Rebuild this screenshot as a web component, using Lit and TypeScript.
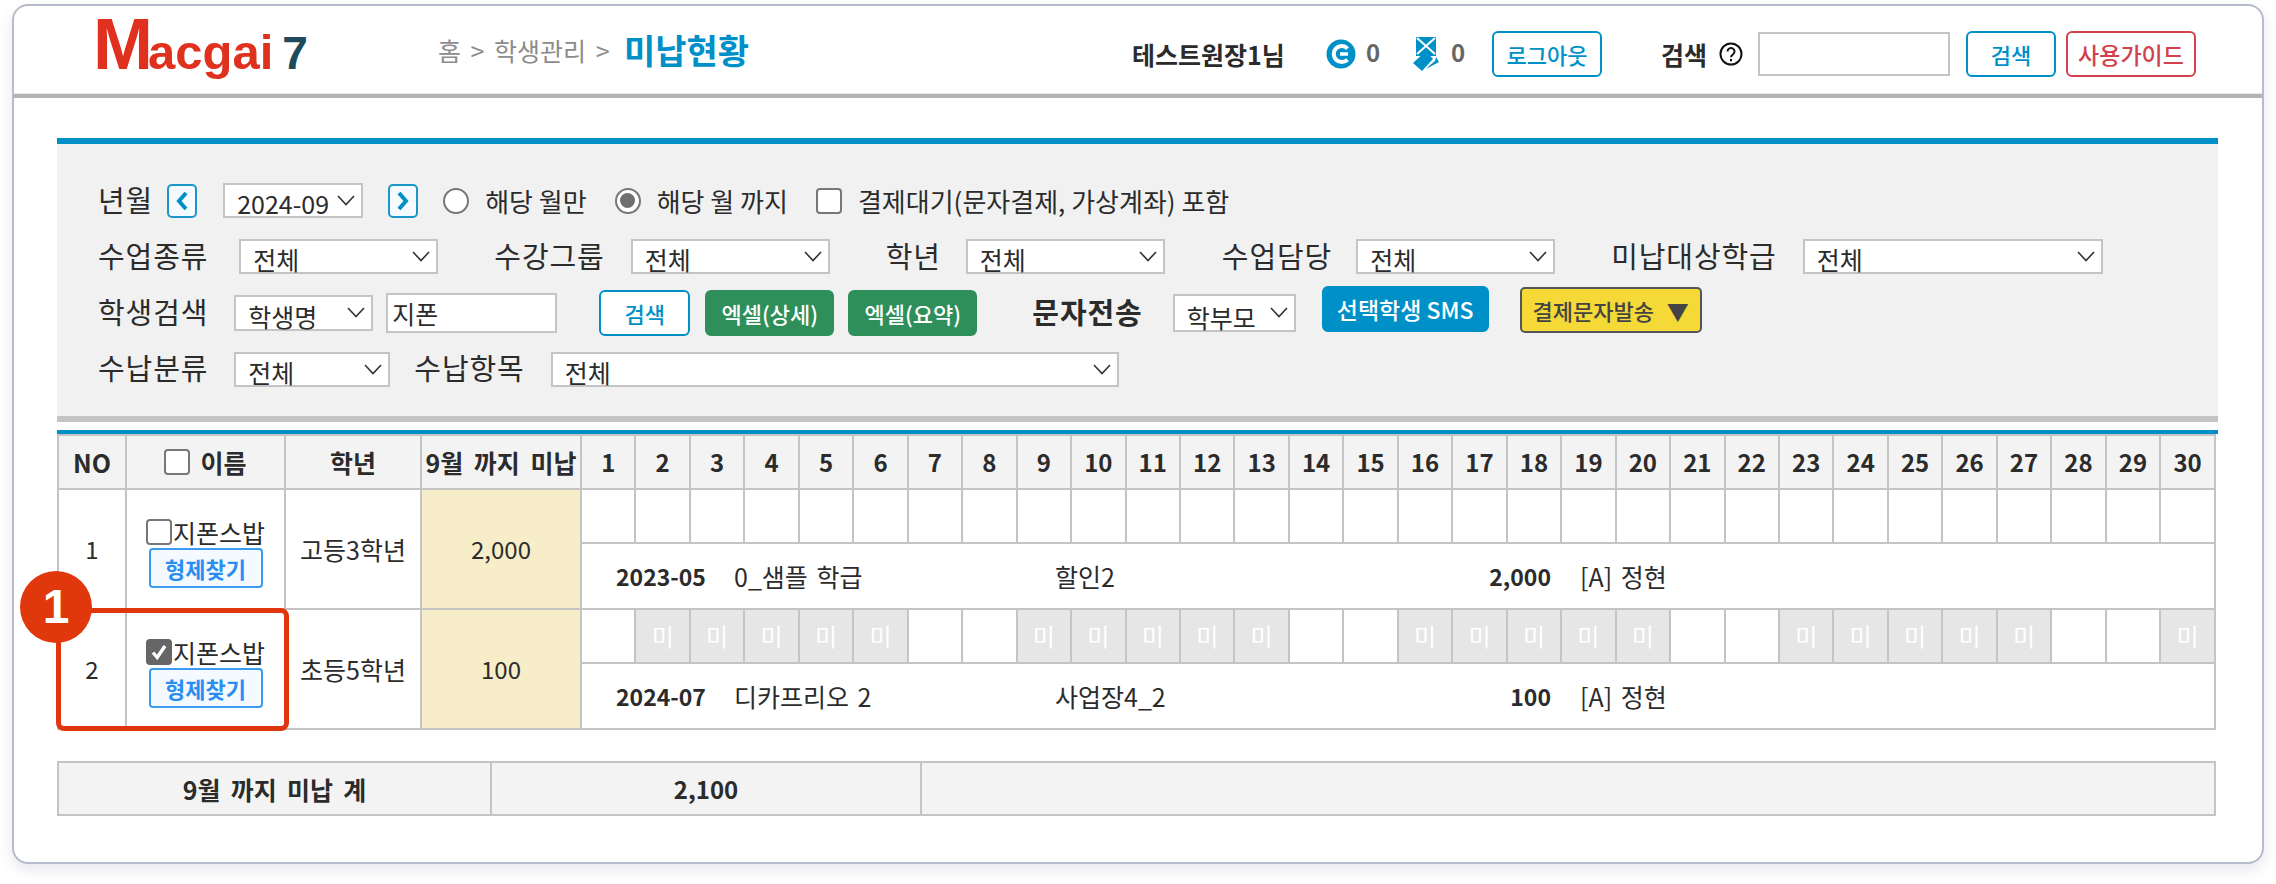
import { LitElement, html, css } from 'lit';
import { customElement } from 'lit/decorators.js';

const DAYS = Array.from({ length: 30 }, (_, i) => i + 1);
// days of the second student that are still unpaid
const UNPAID = new Set([2, 3, 4, 5, 6, 9, 10, 11, 12, 13, 16, 17, 18, 19, 20, 23, 24, 25, 26, 27, 30]);

interface Student {
    no: number;
    checked: boolean;
    grade: string;
    owed: string;
    month: string;
    group: string;
    item: string;
    teacher: string;
    unpaidDays: Set<number>;
}

const STUDENTS: Student[] = [
    { no: 1, checked: false, grade: '고등3학년', owed: '2,000', month: '2023-05', group: '0_샘플 학급', item: '할인2', teacher: '[A] 정현', unpaidDays: new Set() },
    { no: 2, checked: true, grade: '초등5학년', owed: '100', month: '2024-07', group: '디카프리오 2', item: '사업장4_2', teacher: '[A] 정현', unpaidDays: UNPAID },
];

@customElement('app-root')
export class AppRoot extends LitElement {
    static styles = css`
        :host {
            display: block;
            height: 884px;
            background: #fff;
            font-family: "Noto Sans CJK KR", "Noto Sans", sans-serif;
            color: #2b2b2b;
            font-size: 24px;
            line-height: 30px;
        }

        .card {
            box-sizing: border-box;
            position: relative;
            margin: 0 12px;
            top: 4px;
            height: 860px;
            border: 2px solid #b6bccb;
            border-radius: 16px;
            box-shadow: 0 6px 14px rgba(120, 130, 150, 0.18);
            background: #fff;
        }

        header {
            display: flex;
            align-items: center;
            height: 88px;
            padding-left: 79px;
            border-bottom: 4px solid #b4b4b4;
            box-shadow: inset 0 -1px 0 #e8e8e8;
        }

        .logo {
            display: flex;
            align-items: baseline;
            width: 345px;
            margin-bottom: 4px;
            font-family: "Liberation Sans", sans-serif;
            font-weight: 700;
            color: #e0301e;
            font-size: 49px;
            line-height: 60px;
        }
        .logo .m { font-size: 72px; letter-spacing: -5px; }
        .logo .seven { color: #1d4a5c; font-size: 46px; margin-left: 9px; }

        .crumb { color: #8c8c8c; font-size: 25px; word-spacing: 4px; width: 186px; white-space: nowrap; }
        .page-title { color: #0090c8; font-size: 34px; font-weight: 700; width: 510px; white-space: nowrap; }
        .tools { display: flex; align-items: center; margin-top: 8px; }
        .user { font-weight: 700; font-size: 25px; width: 194px; white-space: nowrap; margin-left: -2px; }
        .point { color: #666; font-weight: 700; font-size: 24px; margin-left: 10px; width: 45px; margin-top: -4px; }
        .search-label { font-weight: 700; font-size: 25px; margin-left: 59px; white-space: nowrap; }
        .help { margin: 0 15px 0 12px; display: block; }

        .btn {
            box-sizing: border-box;
            height: 46px;
            border: 2px solid #0090c8;
            border-radius: 6px;
            background: #fff;
            color: #0090c8;
            font: inherit;
            font-size: 22px;
            font-weight: 500;
            padding: 0;
            white-space: nowrap;
        }
        .btn.logout { width: 110px; margin-left: -4px; }
        .btn.top-search { width: 90px; margin: 0 10px 0 16px; }
        .btn.guide { width: 130px; border-color: #d2414c; color: #d2414c; font-size: 23px; }
        .btn.row-search { width: 91px; margin-left: 42px; }
        .btn.excel { width: 129px; background: #2e8f5b; border-color: #2e8f5b; color: #fff; margin-left: 15px; }
        .btn.excel + .btn.excel { margin-left: 14px; }
        .btn.sms { width: 167px; background: #0090c8; color: #fff; margin: -7px 0 0 26px; font-size: 23px; }
        .btn.pay { width: 182px; background: #f5d936; border-color: #555; color: #444; margin: -6px 0 0 31px; word-spacing: 8px; border-radius: 5px; }

        input.text {
            box-sizing: border-box;
            border: 2px solid #c4c4c4;
            background: #fff;
            font: inherit;
            font-size: 25px;
            padding: 0 4px;
            color: inherit;
            margin: 0;
        }
        input.top { width: 192px; height: 44px; }
        input.name { width: 171px; height: 40px; margin-left: 13px; }

        main { padding: 40px 44px 0 43px; }

        .filters {
            box-sizing: border-box;
            height: 284px;
            padding-top: 39px;
            background: #f1f1f1;
            border-top: 6px solid #0090c8;
            border-bottom: 6px solid #c4c4c4;
        }
        .row { display: flex; align-items: center; padding-left: 41px; white-space: nowrap; }
        .row.r1 { height: 35px; margin-bottom: 21px; }
        .row.r2 { height: 35px; margin-bottom: 21px; }
        .row.r3 { height: 35px; margin-bottom: 21px; }
        .row.r4 { height: 36px; }

        label.field { font-size: 29px; letter-spacing: 0.9px; line-height: 30px; margin-bottom: 4px; }
        label.strong { font-weight: 700; margin-left: 55px; }

        .pick {
            box-sizing: border-box;
            display: flex;
            align-items: flex-end;
            justify-content: space-between;
            flex: none;
            height: 35px;
            border: 2px solid #c4c4c4;
            background: #fff;
            padding: 0 6px 0 12px;
            font-size: 25px;
            line-height: 30px;
        }
        .pick span { margin-bottom: -2px; }
        .pick svg { align-self: center; }

        .w-month { width: 140px; margin-left: 26px; }
        .w-200 { width: 199px; }
        .w-300 { width: 300px; }
        .w-kind { width: 139px; height: 36px; margin-left: 26px; }
        .w-parent { width: 123px; margin-left: 30px; height: 38px; }
        .w-cat { width: 156px; margin-left: 26px; }
        .w-item { width: 568px; margin-left: 26px; }
        .ml-24 { margin-left: 24px; }
        .ml-25 { margin-left: 25px; }
        .ml-26 { margin-left: 26px; }
        .ml-31 { margin-left: 31px; }
        .gap-24 { margin-left: 24px; }
        .gap-56 { margin-left: 56px; }
        .gap-57 { margin-left: 57px; }

        .nav {
            box-sizing: border-box;
            width: 30px;
            height: 34px;
            display: flex;
            align-items: center;
            justify-content: center;
            background: #f4fafd;
            border: 2px solid #1a96c8;
            border-radius: 5px;
        }
        .nav.prev { margin-left: 14px; }
        .nav.next { margin-left: 25px; }

        .opt { display: flex; align-items: center; font-size: 26px; }
        .opt .tick { margin-right: 16px; }
        .opt.first { margin-left: 25px; margin-right: 28px; }
        .opt.second { margin-right: 28px; }
        .dot {
            box-sizing: border-box;
            width: 26px;
            height: 26px;
            border: 2px solid #777;
            border-radius: 50%;
            background: #fff;
            display: flex;
            align-items: center;
            justify-content: center;
        }
        .dot.on::after {
            content: '';
            width: 15px;
            height: 15px;
            border-radius: 50%;
            background: #6f6f6f;
        }
        .box {
            box-sizing: border-box;
            display: inline-flex;
            align-items: center;
            justify-content: center;
            flex: none;
            width: 26px;
            height: 26px;
            border: 2px solid #777;
            border-radius: 4px;
            background: #fff;
        }
        .box.on { background: #666; border-color: #666; }

        .grid-wrap {
            margin-top: 8px;
            border-top: 4px solid #0090c8;
        }
        table {
            border-collapse: collapse;
            table-layout: fixed;
            width: 2159px;
        }
        td, th {
            border: 2px solid #c4c4c4;
            padding: 0;
            text-align: center;
            font-weight: 400;
        }
        thead th {
            height: 52px;
            background: #f3f3f3;
            font-weight: 700;
            font-size: 25px;
            white-space: nowrap;
        }
        thead th.day { font-size: 24px; }
        thead th.until { word-spacing: 5px; }
        thead .name-head { display: flex; align-items: center; justify-content: center; gap: 10px; }
        .c-no { width: 68px; }
        .c-name { width: 159px; }
        .c-grade { width: 136px; }
        .c-owed { width: 160px; }
        .day-row td { height: 52px; }
        .detail-row td { height: 64px; }
        td.grade { font-size: 25px; }
        td.owed { background: #f7edc8; }
        td.miss { background: #e6e6e6; color: #fff; font-size: 24px; }
        td.person { padding-top: 9px; }

        .who { display: flex; align-items: center; justify-content: center; font-size: 25px; line-height: 26px; }
        .who .box { margin-right: 1px; }
        .btn.find {
            display: block;
            width: 114px;
            height: 40px;
            margin: 3px auto 0;
            border-color: #3a9bf0;
            background: #f4faff;
            color: #2a8df0;
            border-radius: 4px;
            font-weight: 700;
        }

        .detail {
            display: grid;
            grid-template-columns: 118px 321px 432px 64px auto;
            align-items: center;
            padding-left: 34px;
            text-align: left;
            line-height: 30px;
            font-size: 25px;
            word-spacing: 3px;
        }
        .detail b { font-weight: 700; font-size: 23px; }
        .detail .amount { text-align: right; }
        .detail .teacher { margin-left: 29px; }

        .total { margin-top: 31px; }
        .total td { height: 51px; background: #f3f3f3; font-weight: 700; font-size: 24px; }
        .total td.sum-label { font-size: 25px; word-spacing: 4.5px; }
        .t-label { width: 433px; }
        .t-sum { width: 430px; }

        .mark {
            position: absolute;
            left: 42px;
            top: 602px;
            box-sizing: border-box;
            width: 233px;
            height: 123px;
            border: 5px solid #e0360e;
            border-radius: 8px;
            pointer-events: none;
        }
        .badge {
            position: absolute;
            left: 6px;
            top: 565px;
            width: 72px;
            height: 72px;
            border-radius: 50%;
            background: #e0380c;
            color: #fff;
            font-family: "Liberation Sans", sans-serif;
            font-weight: 700;
            font-size: 48px;
            line-height: 72px;
            text-align: center;
        }
    `;

    private chevron() {
        return html`<svg width="18" height="11" viewBox="0 0 18 11" fill="none" stroke="#333" stroke-width="1.6"><path d="M1 1l8 8.5L17 1"/></svg>`;
    }

    private pick(value: string, cls: string) {
        return html`<div class="pick ${cls}"><span>${value}</span>${this.chevron()}</div>`;
    }

    private navArrow(d: string) {
        return html`<svg width="14" height="20" viewBox="0 0 14 20" fill="none" stroke="#0090c8" stroke-width="4"><path d=${d}/></svg>`;
    }

    private tick() {
        return html`<svg width="18" height="18" viewBox="0 0 18 18" fill="none" stroke="#fff" stroke-width="3.4"><path d="M3 9.5l4.2 5L15 3"/></svg>`;
    }

    private renderHeader() {
        return html`
            <header>
                <div class="logo"><span class="m">M</span><span>acgai</span><span class="seven">7</span></div>
                <div class="crumb">홈 &gt; 학생관리 &gt;</div>
                <div class="page-title">미납현황</div>
                <div class="tools">
                    <div class="user">테스트원장1님</div>
                    <svg width="30" height="30" viewBox="0 0 30 30"><circle cx="15" cy="15" r="14.5" fill="#0090c8"/><path d="M21.5 9.5a8 8 0 1 0 0 11" fill="none" stroke="#fff" stroke-width="4"/><path d="M14 15h8" stroke="#fff" stroke-width="3.5"/></svg>
                    <span class="point">0</span>
                    <svg width="30" height="35" viewBox="0 0 28 35"><rect x="4" width="20" height="19" fill="#0090c8"/><path d="M5 1l18 16M23 1L5 17" stroke="#fff" stroke-width="2"/><path d="M1 26l13-12 7 8-11 12z" fill="#0090c8"/><path d="M14 32l13-7-3-5-1 4-6 5z" fill="#0090c8"/></svg>
                    <span class="point">0</span>
                    <button class="btn logout">로그아웃</button>
                    <span class="search-label">검색</span>
                    <svg class="help" width="24" height="24" viewBox="0 0 24 24" fill="none" stroke="#111" stroke-width="2"><circle cx="12" cy="12" r="10.5"/><path d="M8.5 9.5a3.5 3.5 0 1 1 5.6 2.8c-1.3 1-2.1 1.5-2.1 3"/><path d="M12 17v2.2"/></svg>
                    <input class="text top" />
                    <button class="btn top-search">검색</button>
                    <button class="btn guide">사용가이드</button>
                </div>
            </header>
        `;
    }

    private renderFilters() {
        return html`
            <section class="filters">
                <div class="row r1">
                    <label class="field">년월</label>
                    <div class="nav prev">${this.navArrow('M11 2L4 10l7 8')}</div>
                    ${this.pick('2024-09', 'w-month')}
                    <div class="nav next">${this.navArrow('M3 2l7 8-7 8')}</div>
                    <div class="opt first"><span class="dot tick"></span>해당 월만</div>
                    <div class="opt second"><span class="dot on tick"></span>해당 월 까지</div>
                    <div class="opt"><span class="box tick"></span>결제대기(문자결제, 가상계좌) 포함</div>
                </div>
                <div class="row r2">
                    <label class="field">수업종류</label>
                    ${this.pick('전체', 'w-200 ml-31')}
                    <label class="field gap-56">수강그룹</label>
                    ${this.pick('전체', 'w-200 ml-26')}
                    <label class="field gap-56">학년</label>
                    ${this.pick('전체', 'w-200 ml-25')}
                    <label class="field gap-57">수업담당</label>
                    ${this.pick('전체', 'w-200 ml-24')}
                    <label class="field gap-56">미납대상학급</label>
                    ${this.pick('전체', 'w-300 ml-26')}
                </div>
                <div class="row r3">
                    <label class="field">학생검색</label>
                    ${this.pick('학생명', 'w-kind')}
                    <input class="text name" value="지폰" />
                    <button class="btn row-search">검색</button>
                    <button class="btn excel">엑셀(상세)</button>
                    <button class="btn excel">엑셀(요약)</button>
                    <label class="field strong">문자전송</label>
                    ${this.pick('학부모', 'w-parent')}
                    <button class="btn sms">선택학생 SMS</button>
                    <button class="btn pay">결제문자발송 ▼</button>
                </div>
                <div class="row r4">
                    <label class="field">수납분류</label>
                    ${this.pick('전체', 'w-cat')}
                    <label class="field gap-24">수납항목</label>
                    ${this.pick('전체', 'w-item')}
                </div>
            </section>
        `;
    }

    private renderStudent(s: Student) {
        return html`
            <tr class="day-row">
                <td rowspan="2">${s.no}</td>
                <td rowspan="2" class="person">
                    <div class="who"><span class="box ${s.checked ? 'on' : ''}">${s.checked ? this.tick() : ''}</span>지폰스밥</div>
                    <button class="btn find">형제찾기</button>
                </td>
                <td rowspan="2" class="grade">${s.grade}</td>
                <td rowspan="2" class="owed">${s.owed}</td>
                ${DAYS.map(d => html`<td class=${s.unpaidDays.has(d) ? 'miss' : ''}>${s.unpaidDays.has(d) ? '미' : ''}</td>`)}
            </tr>
            <tr class="detail-row">
                <td colspan="30">
                    <div class="detail">
                        <b>${s.month}</b>
                        <span>${s.group}</span>
                        <span>${s.item}</span>
                        <b class="amount">${s.owed}</b>
                        <span class="teacher">${s.teacher}</span>
                    </div>
                </td>
            </tr>
        `;
    }

    private renderGrid() {
        return html`
            <div class="grid-wrap">
                <table>
                    <colgroup>
                        <col class="c-no" /><col class="c-name" /><col class="c-grade" /><col class="c-owed" />
                        ${DAYS.map(() => html`<col />`)}
                    </colgroup>
                    <thead>
                        <tr>
                            <th>NO</th>
                            <th><div class="name-head"><span class="box"></span>이름</div></th>
                            <th>학년</th>
                            <th class="until">9월 까지 미납</th>
                            ${DAYS.map(d => html`<th class="day">${d}</th>`)}
                        </tr>
                    </thead>
                    <tbody>${STUDENTS.map(s => this.renderStudent(s))}</tbody>
                </table>
                <table class="total">
                    <colgroup><col class="t-label" /><col class="t-sum" /><col /></colgroup>
                    <tr><td class="sum-label">9월 까지 미납 계</td><td>2,100</td><td></td></tr>
                </table>
            </div>
        `;
    }

    render() {
        return html`
            <div class="card">
                ${this.renderHeader()}
                <main>
                    ${this.renderFilters()}
                    ${this.renderGrid()}
                </main>
                <div class="mark"></div>
                <div class="badge">1</div>
            </div>
        `;
    }
}

declare global {
    interface HTMLElementTagNameMap {
        'app-root': AppRoot;
    }
}
